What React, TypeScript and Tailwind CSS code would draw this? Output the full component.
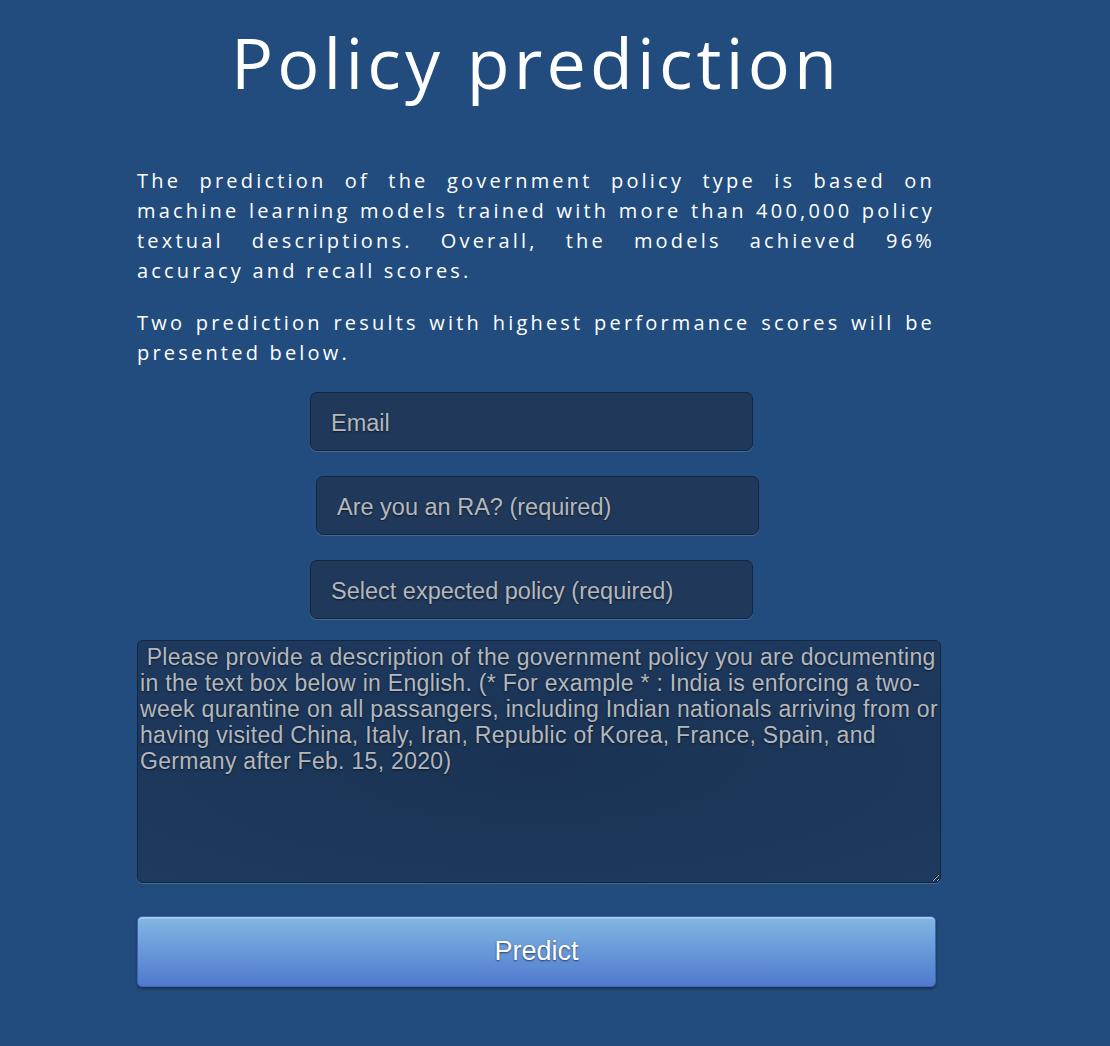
import React from "react";

const inputCls =
  "block w-[443px] h-[59px] rounded-[7px] border border-[#13243b] bg-[#20395a] px-[20px] pt-[3px] text-[23.5px] text-[#b9bdc2] placeholder:text-[#b4b8bd] [text-shadow:0_1px_2px_rgba(0,0,0,0.6)] shadow-[0_1px_0_rgba(120,160,210,0.35)] outline-none [font-family:'Liberation_Sans',Arial,sans-serif]";

const jLine = "block whitespace-nowrap text-justify [text-align-last:justify]";
const lLine = "block whitespace-nowrap";

export default function App() {
  return (
    <div className="min-h-[1046px] w-full bg-[#214c7d] pl-[137px] [font-family:'Open_Sans',sans-serif]">
      <div className="w-[798px] flex flex-col">
        <h1 className="mt-[14px] text-center text-white text-[70px] leading-[96px] tracking-[4.2px] font-normal">
          Policy prediction
        </h1>
        <div className="mt-[56px] text-white text-[20px] leading-[30px] tracking-[3.2px]">
          <p>
            <span className={jLine}>The prediction of the government policy type is based on</span>
            <span className={jLine}>machine learning models trained with more than 400,000 policy</span>
            <span className={jLine}>textual descriptions. Overall, the models achieved 96%</span>
            <span className={lLine}>accuracy and recall scores.</span>
          </p>
          <p className="mt-[22px]">
            <span className={jLine}>Two prediction results with highest performance scores will be</span>
            <span className={lLine}>presented below.</span>
          </p>
        </div>
        <div className="ml-[173px] mt-[24px]">
          <input className={inputCls} placeholder="Email" />
        </div>
        <div className="ml-[179px] mt-[25px]">
          <input className={inputCls} placeholder="Are you an RA? (required)" />
        </div>
        <div className="ml-[173px] mt-[25px]">
          <input className={inputCls} placeholder="Select expected policy (required)" />
        </div>
        <textarea
          className="mt-[21px] w-[804px] h-[243px] rounded-[6px] border border-[#13243b] bg-[radial-gradient(ellipse_at_center,#1a3354_0%,#1e3a5f_100%)] px-[2px] pt-[3px] text-[23px] leading-[26px] tracking-[0.3px] text-[#b9bdc2] placeholder:text-[#b4b8bd] [text-shadow:0_1px_2px_rgba(0,0,0,0.6)] shadow-[0_1px_0_rgba(120,160,210,0.35)] outline-none [font-family:'Liberation_Sans',Arial,sans-serif] whitespace-pre overflow-hidden"
          placeholder={
            " Please provide a description of the government policy you are documenting\nin the text box below in English. (* For example * : India is enforcing a two-\nweek qurantine on all passangers, including Indian nationals arriving from or\nhaving visited China, Italy, Iran, Republic of Korea, France, Spain, and\nGermany after Feb. 15, 2020)"
          }
        />
        <button className="mt-[33px] w-[799px] h-[71px] rounded-[5px] border border-[#3e66b8] bg-gradient-to-b from-[#83b7e1] to-[#5079cf] shadow-[0_2px_3px_rgba(0,0,0,0.35),inset_0_2px_0_rgba(255,255,255,0.25)] text-white text-[27px] [text-shadow:0_1px_2px_rgba(0,0,0,0.6)] [font-family:'Liberation_Sans',Arial,sans-serif]">
          Predict
        </button>
      </div>
    </div>
  );
}
